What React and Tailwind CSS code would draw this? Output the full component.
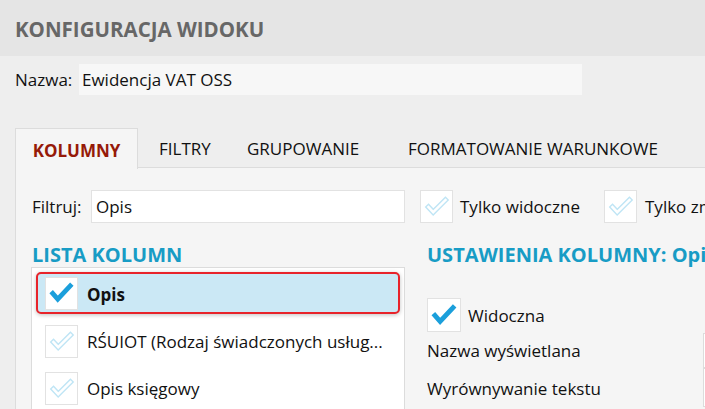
import React from "react";

function CheckOn({ size = 33 }) {
  return (
    <div className="shrink-0 flex items-center justify-center bg-white border border-[#e2e2e2]" style={{ width: size, height: size }}>
      <svg width="33" height="33" viewBox="0 0 33 33">
        <polyline points="5.5,14.5 12.5,22.5 27.5,6.5" fill="none" stroke="#1b9fdb" strokeWidth="5" strokeLinejoin="miter" strokeLinecap="butt" />
      </svg>
    </div>
  );
}

function CheckOff({ size = 33 }) {
  return (
    <div className="shrink-0 flex items-center justify-center bg-white border border-[#e2e2e2]" style={{ width: size, height: size }}>
      <svg width="33" height="33" viewBox="0 0 33 33">
        <polyline points="6,15 13,22.5 28,7.5" fill="none" stroke="#bfe5f5" strokeWidth="5.6" strokeLinejoin="miter" strokeLinecap="butt" />
        <polyline points="7,16.1 13,22.5 27,8.6" fill="none" stroke="#ffffff" strokeWidth="2.6" strokeLinejoin="miter" strokeLinecap="butt" />
      </svg>
    </div>
  );
}

export default function App() {
  const font = { fontFamily: '"Open Sans", "Noto Sans", sans-serif' };
  return (
    <div className="w-[705px] h-[409px] overflow-hidden bg-[#eeeeee] text-[#111] text-[17px]" style={font}>
      <div className="h-[56px] bg-[#e5e5e5] flex items-center pl-[15px] pt-[2px]">
        <span className="text-[20.5px] font-bold text-[#676767]">KONFIGURACJA WIDOKU</span>
      </div>
      <div className="mt-[8px] flex items-center pl-[15px] h-[31px]">
        <span className="w-[64px] shrink-0">Nazwa:</span>
        <div className="w-[503px] shrink-0 h-[31px] bg-[#f7f7f7] flex items-center pl-[3px]">Ewidencja VAT OSS</div>
      </div>
      <div className="mt-[33px] flex pl-[15px] h-[40px]">
        <div className="w-[123px] shrink-0 h-[41px] pt-[3px] bg-[#f5f5f5] border border-[#dcdcdc] border-b-0 flex items-center justify-center font-bold text-[#961a08] relative z-10">KOLUMNY</div>
        <div className="flex-1 flex items-center pt-[3px] border-b border-[#dcdcdc] whitespace-nowrap">
          <div className="w-[90px] shrink-0 pl-[21px]">FILTRY</div>
          <div className="w-[161px] shrink-0 pl-[19px]">GRUPOWANIE</div>
          <div className="pl-[19px] shrink-0">FORMATOWANIE WARUNKOWE</div>
        </div>
      </div>
      <div className="ml-[15px] h-[300px] border-l border-[#dcdcdc] bg-[#f5f5f5] pl-[16px] overflow-hidden">
        <div className="pt-[22px] flex items-center whitespace-nowrap">
          <span className="w-[59px] shrink-0">Filtruj:</span>
          <div className="w-[314px] shrink-0 h-[33px] bg-white border border-[#e2e2e2] flex items-center pl-[4px]">Opis</div>
          <div className="ml-[15px] shrink-0"><CheckOff /></div>
          <span className="ml-[7px] w-[144px] shrink-0">Tylko widoczne</span>
          <CheckOff />
          <span className="ml-[8px] shrink-0">Tylko zmienione</span>
        </div>
        <div className="mt-[19px] flex">
          <div className="w-[374px] shrink-0 -ml-[1px]">
            <div className="pl-[1px] h-[25px] text-[20px] font-bold text-[#189cc5] leading-[25px]">LISTA KOLUMN</div>
            <div className="bg-white border border-[#dcdcdc] h-[200px] p-[4px] flex flex-col gap-[4px]">
              <div className="h-[42px] rounded-[5px] border-2 border-[#e8232a] bg-[#cbe8f5] shadow-[0_1px_4px_rgba(0,0,0,0.25)] flex items-center pl-[7px]">
                <CheckOn />
                <span className="ml-[9px] pt-[3px] font-bold">Opis</span>
              </div>
              <div className="h-[42px] flex items-center pl-[9px] mt-[2px]">
                <CheckOff />
                <span className="ml-[9px] pt-[2px] whitespace-nowrap overflow-hidden">RŚUIOT (Rodzaj świadczonych usług...</span>
              </div>
              <div className="h-[42px] flex items-center pl-[9px] mt-[1px]">
                <CheckOff />
                <span className="ml-[9px] pt-[2px]">Opis księgowy</span>
              </div>
            </div>
          </div>
          <div className="ml-[22px] shrink-0 w-[600px]">
            <div className="h-[25px] text-[20px] font-bold text-[#189cc5] leading-[25px] whitespace-nowrap">USTAWIENIA KOLUMNY: Opis</div>
            <div className="mt-[31px] flex items-center">
              <CheckOn size={34} />
              <span className="ml-[7px] pt-[2px]">Widoczna</span>
            </div>
            <div className="flex items-center h-[37px]">
              <span className="w-[276px] shrink-0">Nazwa wyświetlana</span>
              <div className="w-[200px] shrink-0 h-[35px] bg-white border border-[#dcdcdc]" />
            </div>
            <div className="flex items-center h-[37px] mt-[1px]">
              <span className="w-[276px] shrink-0">Wyrównywanie tekstu</span>
              <div className="w-[200px] shrink-0 h-[39px] bg-white border border-[#dcdcdc] self-end" />
            </div>
          </div>
        </div>
      </div>
    </div>
  );
}
